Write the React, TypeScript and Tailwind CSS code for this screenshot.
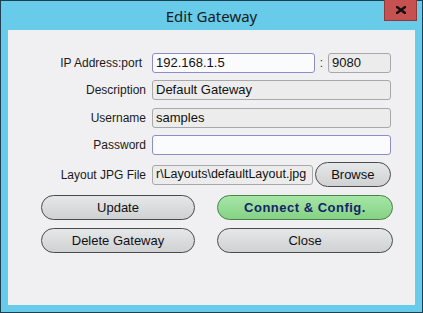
import React from "react";

const font = { fontFamily: '"Liberation Sans", Arial, sans-serif' };

const Field = ({ value, active, small }: { value: string; active?: boolean; small?: boolean }) => (
  <div
    className={`h-[20px] flex-1 min-w-0 rounded-[3px] border px-[3px] flex items-center text-[#111] overflow-hidden whitespace-nowrap ${
      active ? "bg-[#fbfbfe] border-[#8c8cc8]" : "bg-[#ececec] border-[#a8a8a8]"
    } ${small ? "text-[12.5px]" : "text-[13px]"}`}
  >
    {value}
  </div>
);

const Row = ({ label, children, labelPad }: { label: string; children: React.ReactNode; labelPad?: boolean }) => (
  <div className="flex items-center">
    <div className={`w-[138px] text-right text-[12px] text-[#1a1a1a] ${labelPad ? "pr-[4px]" : ""}`}>{label}</div>
    <div className="ml-[6px] w-[239px] flex items-center">{children}</div>
  </div>
);

const PillButton = ({ label, green }: { label: string; green?: boolean }) => (
  <button
    className={`h-[25px] rounded-full border text-[13px] flex items-center justify-center ${
      green
        ? "bg-gradient-to-b from-[#a6e6a6] to-[#85d285] border-[#4a7f4a] text-[color:#16236a] font-bold tracking-[0.5px]"
        : "bg-gradient-to-b from-[#e6e7e9] to-[#cfd1d3] border-[#4a4a4a] text-[color:#111]"
    }`}
  >
    {label}
  </button>
);

export default function App() {
  return (
    <div className="w-[423px] h-[313px] bg-[#67cbe9] border border-[#1e3f4f] flex flex-col" style={font}>
      <div className="h-[29px] relative flex items-center justify-center">
        <span className="text-[15px] text-[#1a1a1a] mt-[2px]" style={{ fontFamily: '"Noto Sans", "Open Sans", sans-serif' }}>
          Edit Gateway
        </span>
        <div className="absolute right-[5px] top-[-1px] w-[33px] h-[21px] bg-[#c75050] border border-[#8e3a3a] border-t-0 flex items-center justify-center">
          <svg width="10" height="8" viewBox="0 0 10 8">
            <path d="M1 1 L9 7 M9 1 L1 7" stroke="#111" strokeWidth="2.4" strokeLinecap="square" />
          </svg>
        </div>
      </div>
      <div className="mx-[7px] mb-[7px] flex-1 bg-[#f0f0f3] flex flex-col pt-[23px]">
        <Row label="IP Address:port" labelPad>
          <div className="w-[163px] flex">
            <Field value="192.168.1.5" active />
          </div>
          <span className="w-[13px] text-center text-[12px] text-[#333]">:</span>
          <div className="w-[63px] flex">
            <Field value="9080" />
          </div>
        </Row>
        <div className="mt-[7px]">
          <Row label="Description">
            <Field value="Default Gateway" />
          </Row>
        </div>
        <div className="mt-[8px]">
          <Row label="Username">
            <Field value="samples" />
          </Row>
        </div>
        <div className="mt-[7px]">
          <Row label="Password">
            <Field value="" active />
          </Row>
        </div>
        <div className="mt-[7px]">
          <Row label="Layout JPG File">
            <div className="w-[162px] flex">
              <Field value="r\Layouts\defaultLayout.jpg" small />
            </div>
            <button className="ml-[2px] w-[77px] h-[25px] rounded-full border border-[#4a4a4a] bg-gradient-to-b from-[#e6e7e9] to-[#cfd1d3] text-[13px] text-[#111]">
              Browse
            </button>
          </Row>
        </div>
        <div className="mt-[8px] pl-[33px] grid grid-cols-[154px_176px] gap-x-[22px] gap-y-[8px]">
          <PillButton label="Update" />
          <PillButton label="Connect & Config." green />
          <PillButton label="Delete Gateway" />
          <PillButton label="Close" />
        </div>
      </div>
    </div>
  );
}
